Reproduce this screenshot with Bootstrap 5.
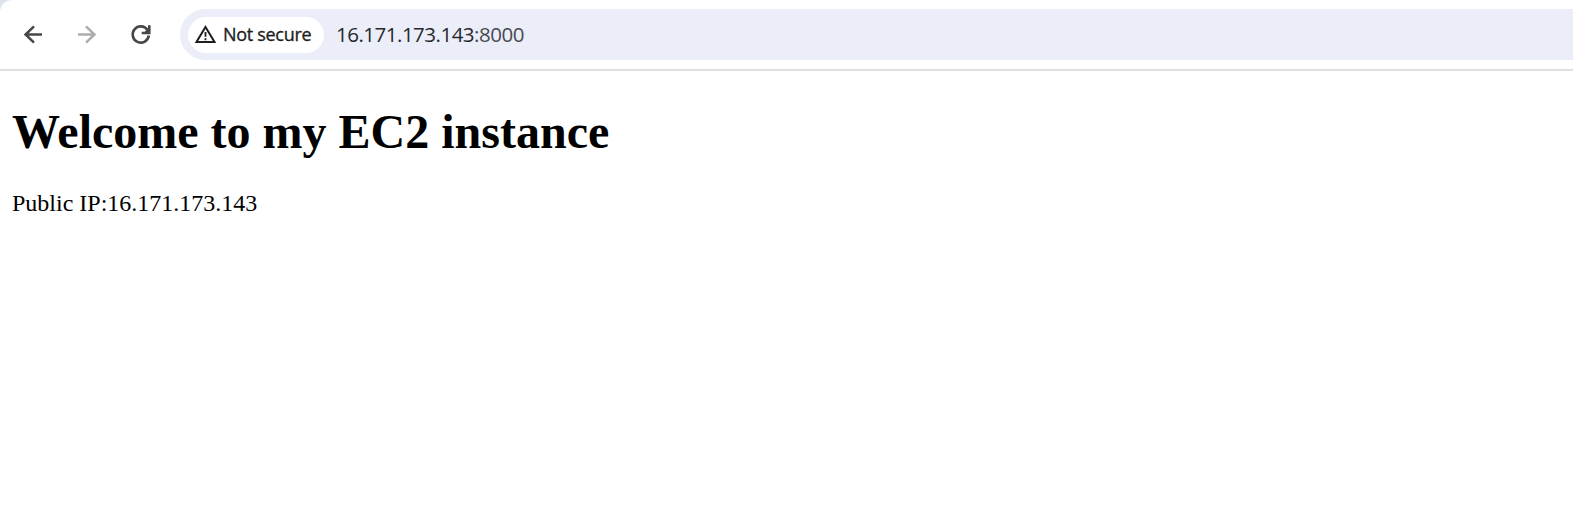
<!DOCTYPE html>
<html lang="en">
<head>
<meta charset="utf-8">
<meta name="viewport" content="width=device-width, initial-scale=1">
<title>16.171.173.143:8000</title>
<link rel="stylesheet" href="https://cdn.jsdelivr.net/npm/bootstrap@5.3.0/dist/css/bootstrap.min.css">
<style>
  html, body { height: 100%; overflow: hidden; }
  body { background: #fff; color: #000; }
  .window-top { background: #dfe3ed; }
  .toolbar { height: 71px; border-bottom: 2px solid #dfdfdf; border-top-left-radius: 12px; padding: 9px 0 9px 20px; background: #fff; }
  .tool-icons { gap: 28px; width: 160px; }
  .tool-icons svg { width: 26px; height: 26px; }
  .address { height: 51px; background: #ebeef8; border-radius: 26px 0 0 26px; padding-left: 8px; font-family: "Open Sans", sans-serif; }
  .chip { width: 136px; height: 36px; border-radius: 18px; padding-left: 7px; background: #fff; color: #1f1f1f; font-size: 18px; letter-spacing: -.3px; }
  .chip span { margin-left: 7px; -webkit-text-stroke: .35px #1f1f1f; }
  .url { margin-left: 12px; font-size: 20.5px; letter-spacing: -.5px; color: #27282c; }
  .url span { color: #484a50; }
  .document { font-family: "Liberation Serif", serif; padding: 0 12px; }
  .document h1 { font-size: 48px; font-weight: 700; line-height: 55px; margin: 33px 0 31px; }
  .document p { font-size: 24px; line-height: 27px; }
</style>
</head>
<body>
<header class="window-top">
  <nav class="toolbar d-flex align-items-center" aria-label="Browser">
    <div class="tool-icons d-flex flex-shrink-0 align-items-center">
      <svg viewBox="0 0 26 26" fill="none" stroke="#474747" stroke-width="2.5"><path d="M22 12.500H5.500M14 4.300 5.500 12.500l8.500 8.200"/></svg>
      <svg viewBox="0 0 26 26" fill="none" stroke="#adadad" stroke-width="2.500"><path d="M4 12.500h16.500M12 4.300 20.500 12.500 12 20.700"/></svg>
      <svg viewBox="0 0 26 26" fill="none" stroke="#474747" stroke-width="2.600"><path d="M20.800 13.500A8.100 8.100 0 1 1 19.500 8M21.300 3.200v7.800h-7.600"/><path d="m16.500 10 4-4v4z" fill="#474747" stroke="none"/></svg>
    </div>
    <div class="address d-flex flex-grow-1 align-items-center">
      <div class="chip d-flex align-items-center flex-shrink-0">
        <svg width="21" height="20" viewBox="0 0 21 20"><path d="M10.500 2 19.500 17H1.500z" fill="none" stroke="#1f1f1f" stroke-width="2"/><path d="M10.500 7v4.800M10.500 13.200v2" stroke="#1f1f1f" stroke-width="1.800"/></svg>
        <span class="text-nowrap">Not secure</span>
      </div>
      <div class="url text-nowrap">16.171.173.143<span class="m-0">:8000</span></div>
    </div>
  </nav>
</header>
<main class="document">
  <h1>Welcome to my EC2 instance</h1>
  <p class="mb-0">Public IP:16.171.173.143</p>
</main>
<script src="https://cdn.jsdelivr.net/npm/bootstrap@5.3.0/dist/js/bootstrap.bundle.min.js"></script>
</body>
</html>
